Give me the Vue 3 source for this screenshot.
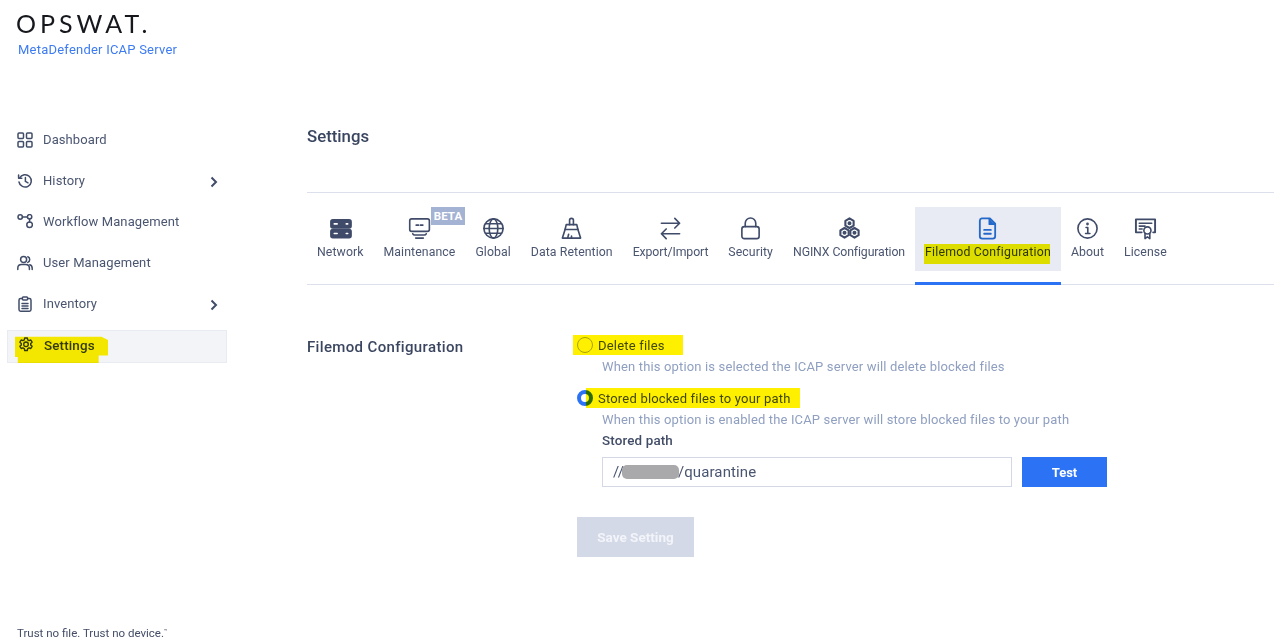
<script setup>
const nav = [
  { label: 'Dashboard', icon: 'dash' },
  { label: 'History', icon: 'hist', more: true },
  { label: 'Workflow Management', icon: 'flow' },
  { label: 'User Management', icon: 'user' },
  { label: 'Inventory', icon: 'inv', more: true },
]
const tabs = [
  { label: 'Network', icon: 'net' },
  { label: 'Maintenance', icon: 'main', beta: true },
  { label: 'Global', icon: 'glob' },
  { label: 'Data Retention', icon: 'broom' },
  { label: 'Export/Import', icon: 'swap', tight: true },
  { label: 'Security', icon: 'lock' },
  { label: 'NGINX Configuration', icon: 'hex', tight: true },
  { label: 'Filemod Configuration', icon: 'file', active: true },
  { label: 'About', icon: 'info' },
  { label: 'License', icon: 'cert' },
]
</script>

<template>
  <div class="page">
    <aside class="side">
      <div class="brand">
        <div class="logo">OPSWAT.</div>
        <div class="product">MetaDefender ICAP Server</div>
      </div>
      <nav class="nav">
        <div v-for="n in nav" :key="n.label" class="nav-item">
          <svg class="nav-icon" viewBox="0 0 16 16" fill="none" stroke="currentColor" stroke-width="1.5" stroke-linecap="round" stroke-linejoin="round">
            <template v-if="n.icon === 'dash'">
              <rect x="1" y="1" width="5.5" height="5.5" rx="1" /><rect x="9.5" y="1" width="5.5" height="5.5" rx="1" />
              <rect x="1" y="9.5" width="5.5" height="5.5" rx="1" /><rect x="9.5" y="9.5" width="5.5" height="5.5" rx="1" />
            </template>
            <template v-else-if="n.icon === 'hist'">
              <path d="M2.600 5A6.200 6.200 0 1 1 2 9" /><path d="M1.600 2v3.200h3.200" /><path d="M8.400 4.600v3.800l2.600 1.400" />
            </template>
            <template v-else-if="n.icon === 'flow'">
              <circle cx="3.200" cy="3" r="2.200" /><circle cx="12.600" cy="2.800" r="2.200" /><circle cx="12.600" cy="10.800" r="2.800" />
              <path d="M5.400 3h5M12.600 5v3" />
            </template>
            <template v-else-if="n.icon === 'user'">
              <circle cx="6.600" cy="4.600" r="3" /><path d="M.8 14.600v-1.400c0-2.200 1.800-3.600 3.800-3.600h4c2 0 3.800 1.400 3.800 3.600v1.400" />
              <path d="M10.800 1.800a3 3 0 0 1 0 5.600M12.800 9.800c1.400.4 2.400 1.700 2.400 3.400v1.400" />
            </template>
            <template v-else>
              <rect x="2" y="2.600" width="12" height="12.600" rx="1.600" /><rect x="5.400" y=".9" width="5.200" height="3" rx=".8" fill="#fff" />
              <path d="M5 7.600h6M5 10h6M5 12.400h6" />
            </template>
          </svg>
          <span>{{ n.label }}</span>
          <svg v-if="n.more" class="chev" viewBox="0 0 8 12" fill="none" stroke="currentColor" stroke-width="2"><path d="M1.500 1.500 6 6l-4.500 4.500" /></svg>
        </div>
        <div class="nav-item current">
          <svg class="nav-icon" viewBox="0 0 16 16" fill="none" stroke="currentColor" stroke-width="1.400" stroke-linejoin="round">
            <path d="M6.700 1h2.600l.4 1.900 1.300.7 1.800-.6 1.300 2.200-1.400 1.300v1.500l1.400 1.300-1.300 2.200-1.800-.6-1.300.7-.4 1.900H6.700l-.4-1.900-1.300-.7-1.800.6-1.300-2.200 1.400-1.300V6.500L1.900 5.200 3.200 3l1.800.6 1.300-.7z" />
            <circle cx="8" cy="7.300" r="2.300" />
          </svg>
          <span>Settings</span>
          <i class="marker marker-nav"></i>
        </div>
      </nav>
      <footer class="foot">Trust no file. Trust no device.<sup>™</sup></footer>
    </aside>

    <main class="main">
      <h1 class="title">Settings</h1>
      <div class="tabs">
        <div v-for="t in tabs" :key="t.label" class="tab" :class="{ active: t.active, tight: t.tight }">
          <svg class="tab-icon" viewBox="0 0 24 24" fill="none" stroke="currentColor" stroke-width="1.700" stroke-linecap="round" stroke-linejoin="round">
            <template v-if="t.icon === 'net'">
              <rect x="2" y="3" width="21" height="8.500" rx="2" fill="currentColor" /><rect x="2" y="13" width="21" height="8.500" rx="2" fill="currentColor" />
              <path d="M5.500 7.200h3M18 7.200h1.500M5.500 17.200h3M18 17.200h1.500" stroke="#fff" />
            </template>
            <template v-else-if="t.icon === 'main'">
              <rect x="1.800" y="2" width="20.500" height="13" rx="2" />
              <path d="M8.500 8.500h2.500M13 8.500h2.500" /><path d="M5 17.500c.5 1 1 1.300 2 1.300h10c1 0 1.500-.3 2-1.300M8 22h8" />
            </template>
            <template v-else-if="t.icon === 'glob'">
              <circle cx="12" cy="12" r="10" /><ellipse cx="12" cy="12" rx="4.500" ry="10" /><path d="M2 12h20M3.500 7h17M3.500 17h17" />
            </template>
            <template v-else-if="t.icon === 'broom'">
              <path d="M10 8V3.500a2 2 0 0 1 4 0V8" /><path d="M6.500 8h11l1.200 5H5.300z" /><path d="M5.300 13 2.500 22h19l-2.800-9" /><path d="M8 22l1-4M12 22v-2" />
            </template>
            <template v-else-if="t.icon === 'swap'">
              <path d="M2.500 6.500h18.500M16.500 1.500l5 5-5 5" /><path d="M21.500 17.500H3M7.500 12.500l-5 5 5 5" />
            </template>
            <template v-else-if="t.icon === 'lock'">
              <rect x="3" y="10" width="18" height="12.500" rx="2.500" /><path d="M6.500 10V6.500a5.500 5.500 0 0 1 11 0V10" />
            </template>
            <template v-else-if="t.icon === 'hex'">
              <g stroke-width="2.200">
                <path d="M12 1.500l4.300 2.500v5L12 11.500 7.700 9V4z" /><path d="M6.800 11.500l4.300 2.500v5l-4.300 2.500-4.300-2.500v-5z" /><path d="M17.200 11.500l4.300 2.500v5l-4.300 2.500-4.300-2.500v-5z" />
                <circle cx="12" cy="6.500" r="1" /><circle cx="6.800" cy="16.500" r="1" /><circle cx="17.200" cy="16.500" r="1" />
              </g>
            </template>
            <template v-else-if="t.icon === 'file'">
              <g stroke-width="1.900">
                <path d="M6 1.500h8.500L20 7v13a2.500 2.500 0 0 1-2.500 2.500h-11A2.500 2.500 0 0 1 4 20V4a2.500 2.500 0 0 1 2-2.500z" />
                <path d="M14 2v5.500h5.500" fill="currentColor" /><path d="M8.500 13.500h7M8.500 17.500h7" />
              </g>
            </template>
            <template v-else-if="t.icon === 'info'">
              <circle cx="12" cy="12" r="10" /><path d="M10.500 11h1.800v6M10 17.200h4.500" /><circle cx="12" cy="7.300" r=".6" fill="currentColor" />
            </template>
            <template v-else>
              <path d="M8 16H2V2.500h20V16h-2" stroke-width="2" /><path d="M5.500 6.500h13M5.500 9.500h6M5.500 12.500h3" />
              <circle cx="14" cy="14" r="3.700" /><path d="M11.500 17v5.500l2.500-1.700 2.500 1.700V17" />
            </template>
          </svg>
          <span class="tab-label">{{ t.label }}</span>
          <span v-if="t.beta" class="beta">BETA</span>
          <i v-if="t.active" class="marker marker-tab"></i>
        </div>
      </div>

      <section class="config">
        <h2 class="config-title">Filemod Configuration</h2>
        <div class="config-body">
          <div class="option">
            <span class="radio"></span>
            <span class="opt-label">Delete files</span>
            <i class="marker marker-del"></i>
          </div>
          <p class="help">When this option is selected the ICAP server will delete blocked files</p>
          <div class="option option-two">
            <span class="radio on"></span>
            <span class="opt-label">Stored blocked files to your path</span>
            <i class="marker marker-store"></i>
          </div>
          <p class="help">When this option is enabled the ICAP server will store blocked files to your path</p>
          <div class="path">
            <div class="path-label">Stored path</div>
            <div class="path-row">
              <div class="field">//<span class="redact"></span>/quarantine</div>
              <button class="btn-test" type="button">Test</button>
            </div>
          </div>
          <button class="btn-save" type="button">Save Setting</button>
        </div>
      </section>
    </main>
  </div>
</template>

<style>
html, body { margin: 0; background: #fff; }
</style>

<style scoped>
.page {
  display: flex;
  height: 644px;
  overflow: hidden;
  font-family: Roboto, "Liberation Sans", sans-serif;
  color: #4a5570;
  background: #fff;
}
.side {
  width: 307px;
  flex: none;
  display: flex;
  flex-direction: column;
  box-sizing: border-box;
  padding-top: 8px;
}
.brand { padding-left: 17px; height: 115px; }
.logo {
  font-family: Lato, "Liberation Sans", sans-serif;
  font-weight: 400;
  font-size: 25px;
  line-height: 30px;
  letter-spacing: 4px;
  color: #16181d;
  margin-left: -1px;
  white-space: nowrap;
}
.product {
  margin: 4px 0 0 1px;
  font-size: 13px;
  line-height: 16px;
  letter-spacing: .22px;
  color: #3d7bf2;
}
.nav {
  display: flex;
  flex-direction: column;
  gap: 8px;
  width: 220px;
  margin-left: 7px;
}
.nav-item {
  position: relative;
  display: flex;
  align-items: center;
  height: 33px;
  padding-left: 10px;
  font-size: 13px;
  letter-spacing: .1px;
}
.nav-icon { width: 16px; height: 16px; margin-right: 10px; color: #414c68; flex: none; }
.chev { position: absolute; left: 203px; top: 12px; width: 8px; height: 12px; color: #414c68; }
.current {
  margin-top: 2px;
  background: #f3f4f8;
  box-shadow: inset 0 0 0 1px #e9ebf2;
  font-weight: 500;
  font-size: 13.400px;
  letter-spacing: .14px;
  color: #333c52;
  padding-left: 11px;
}
.current .nav-icon { margin-right: 10px; color: #333c52; margin-top: -3px; }
.current span { margin-top: -3px; }
.marker {
  position: absolute;
  display: block;
  background: #fff200;
  mix-blend-mode: multiply;
  pointer-events: none;
}
.marker-nav {
  left: 8px;
  top: 6px;
  width: 93px;
  height: 27px;
  clip-path: polygon(0 3%, 93% 3%, 100% 15%, 100% 72%, 90% 72%, 90% 100%, 3% 100%, 3% 78%, 0 78%);
}
.foot {
  margin-top: auto;
  padding: 0 0 4px 17px;
  font-size: 11.500px;
  line-height: 14px;
  color: #434d66;
}
.foot sup { font-size: 6px; line-height: 0; vertical-align: 4px; }

.main { flex: 1; min-width: 0; }
.title {
  margin: 0;
  height: 192px;
  box-sizing: border-box;
  padding-top: 125px;
  font-size: 16.800px;
  line-height: 22px;
  font-weight: 500;
  color: #3a4560;
}
.tabs {
  display: flex;
  align-items: flex-start;
  height: 93px;
  box-sizing: border-box;
  padding-top: 14px;
  border-top: 1px solid #dcdfec;
  border-bottom: 1px solid #dcdfec;
}
.tab {
  position: relative;
  height: 64px;
  padding: 10px 10px 0;
  box-sizing: border-box;
  display: flex;
  flex-direction: column;
  align-items: center;
  font-size: 12.300px;
  letter-spacing: .08px;
  white-space: nowrap;
  color: #4a5570;
}
.tab.tight { letter-spacing: -.12px; }
.tab-icon { width: 23px; height: 23px; color: #3f4b69; flex: none; }
.tab-label { margin-top: 4px; line-height: 16px; }
.tab.active { background: #e8ebf3; color: #2f3a34; letter-spacing: .22px; }
.tab.active .tab-icon { color: #2469c9; }
.tab.active::after {
  content: "";
  position: absolute;
  left: 0;
  right: 0;
  top: 75px;
  height: 3px;
  background: #2b72f5;
}
.beta {
  position: absolute;
  left: 57.500px;
  top: 0;
  width: 34px;
  height: 18px;
  background: #a4b2d3;
  color: #fff;
  font-size: 11.500px;
  font-weight: 700;
  line-height: 18px;
  text-align: center;
}
.marker-tab { left: 9px; right: 11px; top: 37px; height: 20px; background: #f4f000; }

.config { display: flex; padding-top: 50px; }
.config-title {
  width: 270px;
  flex: none;
  margin: 0;
  font-size: 15px;
  line-height: 24px;
  font-weight: 500;
  letter-spacing: .35px;
  color: #3a4560;
}
.config-body { display: flex; flex-direction: column; align-items: flex-start; }
.option {
  position: relative;
  display: flex;
  align-items: center;
  height: 20px;
  font-size: 13px;
  letter-spacing: .2px;
  color: #414c66;
}
.option-two { margin-top: 11px; }
.radio {
  width: 16px;
  height: 16px;
  box-sizing: border-box;
  border: 1px solid #a8adb9;
  border-radius: 50%;
  margin-right: 5px;
  background: #fff;
}
.radio.on { border: 4.500px solid #2b72f5; }
.opt-label { white-space: nowrap; }
.marker-del { left: -4px; top: 0; width: 110px; height: 20px; background: #fff000; }
.marker-store { left: 9px; top: 0; width: 214px; height: 20px; background: #fff000; }
.help {
  margin: 2px 0 0 25px;
  height: 20px;
  font-size: 13px;
  line-height: 20px;
  letter-spacing: .15px;
  color: #8f9fc0;
  white-space: nowrap;
}
.path { margin: 2px 0 0 25px; }
.path-label { font-size: 13.400px; line-height: 18px; font-weight: 500; letter-spacing: .15px; color: #414c66; }
.path-row { display: flex; gap: 10px; margin-top: 7px; }
.field {
  display: flex;
  align-items: center;
  width: 410px;
  height: 30px;
  box-sizing: border-box;
  padding-left: 10px;
  border: 1px solid #d4d8e6;
  font-size: 15px;
  letter-spacing: .1px;
  color: #4a5570;
}
.redact {
  width: 57px;
  height: 14px;
  margin-left: -2px;
  margin-right: -1px;
  border-radius: 5px;
  background: #a9a9ac;
}
.btn-test, .btn-save {
  border: 0;
  padding: 0;
  color: #fff;
  font-family: inherit;
  font-weight: 700;
  font-size: 13px;
}
.btn-test { width: 85px; height: 30px; background: #2b72f5; }
.btn-save {
  width: 117px;
  height: 40px;
  margin-top: 30px;
  background: #d3d9e7;
  color: #f2f4f9;
  font-size: 13.500px;
}
</style>
